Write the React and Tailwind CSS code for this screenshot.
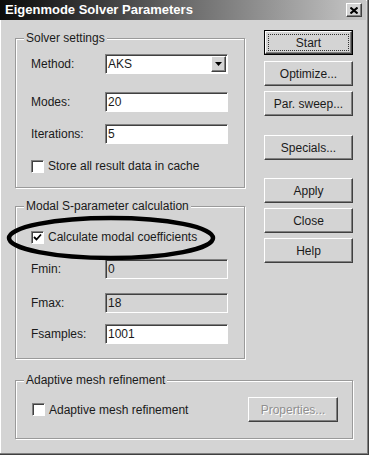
import React from "react";

const font = { fontFamily: '"Liberation Sans", Arial, sans-serif' };

function Check({ checked }) {
  return (
    <span className="inline-flex h-[13px] w-[13px] shrink-0 items-center justify-center border border-t-[#808080] border-l-[#808080] border-b-white border-r-white bg-white shadow-[inset_1px_1px_0_#404040]">
      {checked && (
        <svg width="9" height="9" viewBox="0 0 9 9">
          <path d="M1 4 L3.5 6.5 L8 1.5" fill="none" stroke="#000" strokeWidth="1.8" />
        </svg>
      )}
    </span>
  );
}

function Field({ value, disabled }) {
  return (
    <div
      className={
        "flex h-[20px] w-[123px] items-center border border-t-[#808080] border-l-[#808080] border-b-white border-r-white pl-[2px] text-[12px] text-[#1a1a1a] shadow-[inset_1px_1px_0_#404040] " +
        (disabled ? "bg-[#d4d4d4]" : "bg-white")
      }
    >
      {value}
    </div>
  );
}

function Btn({ children, className = "", disabled = false }) {
  return (
    <div
      className={
        "flex h-[25px] w-[89px] items-center justify-center border border-t-white border-l-white border-r-[#404040] border-b-[#404040] bg-[#d4d4d4] text-[12px] shadow-[inset_-1px_-1px_0_#808080] " +
        (disabled ? "text-[#8f8f8f] [text-shadow:1px_1px_0_#fff] " : "text-[#1a1a1a] ") +
        className
      }
    >
      {children}
    </div>
  );
}

function Group({ title, className = "", children }) {
  return (
    <div className={"relative border border-[#9a9a9a] shadow-[inset_1px_1px_0_#fff,1px_1px_0_#fff] " + className}>
      <span className="absolute -top-[8px] left-[8px] bg-[#d4d4d4] px-[2px] text-[12px] leading-[14px] text-[#1a1a1a]">
        {title}
      </span>
      {children}
    </div>
  );
}

function Row({ label, children, className = "" }) {
  return (
    <div className={"flex h-[20px] items-center " + className}>
      <span className="w-[74px] text-[12px] text-[#1a1a1a]">{label}</span>
      {children}
    </div>
  );
}

export default function App() {
  return (
    <div
      style={font}
      className="relative h-[455px] w-[369px] overflow-hidden bg-[#d4d4d4] shadow-[inset_-1px_-1px_0_#404040,inset_-2px_-2px_0_#808080,inset_1px_1px_0_#fff]"
    >
      {/* Title bar */}
      <div className="flex h-[20px] w-[366px] items-center justify-between bg-linear-to-r from-[#0c0c0c] via-[#6a6a6a] to-[#c8c8c8] pl-[5px] pr-[4px]">
        <span className="text-[13px] font-bold leading-[16px] text-white">Eigenmode Solver Parameters</span>
        <div className="flex h-[14px] w-[16px] items-center justify-center border border-t-white border-l-white border-r-[#404040] border-b-[#404040] bg-[#d4d4d4] shadow-[inset_-1px_-1px_0_#808080]">
          <svg width="8" height="7" viewBox="0 0 8 7">
            <path d="M0.5 0.5 L7.5 6.5 M7.5 0.5 L0.5 6.5" stroke="#000" strokeWidth="2" />
          </svg>
        </div>
      </div>

      <div className="flex items-start pl-[15px]">
        {/* Left column */}
        <div className="flex w-[230px] flex-col pt-[18px]">
          <Group title="Solver settings" className="h-[150px] pl-[15px] pt-[15px]">
            <Row label="Method:">
              <div className="flex h-[20px] w-[123px] items-center justify-between border border-t-[#808080] border-l-[#808080] border-b-white border-r-white bg-white pl-[2px] pr-[1px] text-[12px] text-[#1a1a1a] shadow-[inset_1px_1px_0_#404040]">
                <span>AKS</span>
                <div className="flex h-[16px] w-[15px] items-center justify-center border border-t-white border-l-white border-r-[#404040] border-b-[#404040] bg-[#d4d4d4] shadow-[inset_-1px_-1px_0_#808080]">
                  <svg width="7" height="4" viewBox="0 0 7 4">
                    <path d="M0 0 H7 L3.5 4 Z" fill="#000" />
                  </svg>
                </div>
              </div>
            </Row>
            <Row label="Modes:" className="mt-[18px]">
              <Field value="20" />
            </Row>
            <Row label="Iterations:" className="mt-[12px]">
              <Field value="5" />
            </Row>
            <div className="mt-[15px] flex h-[14px] items-center gap-[4px]">
              <Check />
              <span className="text-[12px] text-[#1a1a1a]">Store all result data in cache</span>
            </div>
          </Group>

          <Group title="Modal S-parameter calculation" className="mt-[18px] h-[153px] pl-[15px] pt-[23px]">
            <div className="flex h-[14px] items-center gap-[4px]">
              <Check checked />
              <span className="text-[12px] text-[#1a1a1a]">Calculate modal coefficients</span>
            </div>
            <Row label="Fmin:" className="mt-[15px]">
              <Field value="0" disabled />
            </Row>
            <Row label="Fmax:" className="mt-[14px]">
              <Field value="18" disabled />
            </Row>
            <Row label="Fsamples:" className="mt-[11px]">
              <Field value="1001" />
            </Row>
          </Group>
        </div>

        {/* Right column */}
        <div className="ml-[19px] flex flex-col pt-[10px]">
          <div className="flex h-[25px] w-[89px] items-center justify-center border border-black bg-[#d4d4d4]">
            <div className="flex h-full w-full items-center justify-center border border-t-white border-l-white border-r-[#404040] border-b-[#404040] shadow-[inset_-1px_-1px_0_#808080]">
              <div className="flex h-[17px] w-[81px] items-center justify-center border border-dotted border-[#333] text-[12px] text-[#1a1a1a]">
                Start
              </div>
            </div>
          </div>
          <Btn className="mt-[6px]">Optimize...</Btn>
          <Btn className="mt-[5px]">Par. sweep...</Btn>
          <Btn className="mt-[19px]">Specials...</Btn>
          <Btn className="mt-[18px]">Apply</Btn>
          <Btn className="mt-[5px]">Close</Btn>
          <Btn className="mt-[5px]">Help</Btn>
        </div>
      </div>

      <div className="pl-[15px] pt-[21px]">
        <Group title="Adaptive mesh refinement" className="flex h-[59px] w-[338px] items-center justify-between pl-[16px] pr-[14px]">
          <div className="flex h-[14px] items-center gap-[4px]">
            <Check />
            <span className="text-[12px] text-[#1a1a1a]">Adaptive mesh refinement</span>
          </div>
          <Btn disabled className="w-[90px]">Properties...</Btn>
        </Group>
      </div>

      {/* Highlight ellipse drawn over the dialog */}
      <svg className="pointer-events-none absolute left-[5px] top-[215px]" width="212" height="46" viewBox="0 0 212 46">
        <ellipse cx="106" cy="23" rx="102" ry="20" fill="none" stroke="#000" strokeWidth="4.5" />
      </svg>
    </div>
  );
}
